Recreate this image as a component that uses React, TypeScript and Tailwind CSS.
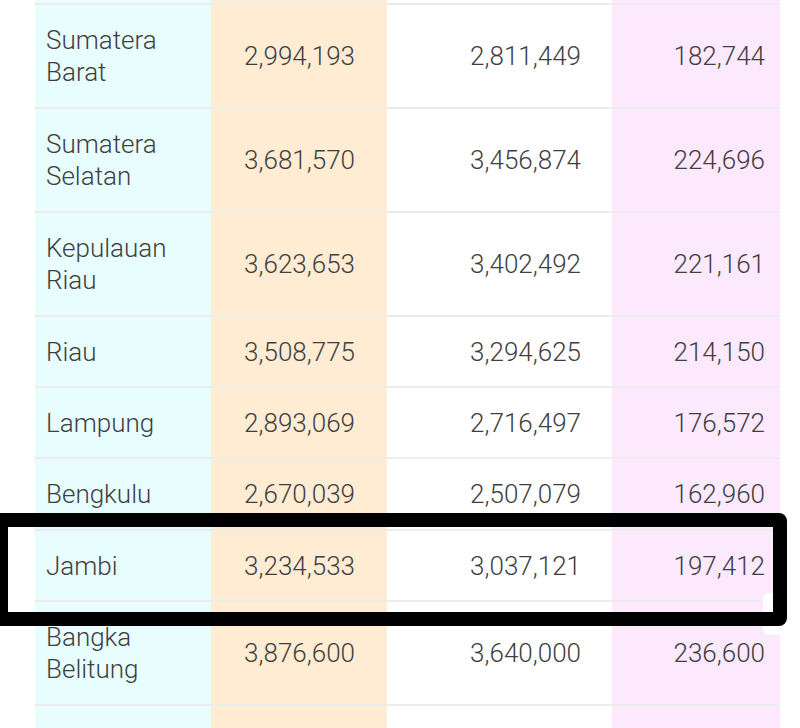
import React from 'react'

type Row = { name: string[]; total: string; a: string; b: string; tall: boolean }

const rows: Row[] = [
  { name: ['Sumatera', 'Barat'], total: '2,994,193', a: '2,811,449', b: '182,744', tall: true },
  { name: ['Sumatera', 'Selatan'], total: '3,681,570', a: '3,456,874', b: '224,696', tall: true },
  { name: ['Kepulauan', 'Riau'], total: '3,623,653', a: '3,402,492', b: '221,161', tall: true },
  { name: ['Riau'], total: '3,508,775', a: '3,294,625', b: '214,150', tall: false },
  { name: ['Lampung'], total: '2,893,069', a: '2,716,497', b: '176,572', tall: false },
  { name: ['Bengkulu'], total: '2,670,039', a: '2,507,079', b: '162,960', tall: false },
  { name: ['Jambi'], total: '3,234,533', a: '3,037,121', b: '197,412', tall: false },
  { name: ['Bangka', 'Belitung'], total: '3,876,600', a: '3,640,000', b: '236,600', tall: true },
]

function Cells({ row }: { row?: Row }) {
  return (
    <>
      <div className="flex w-[176px] shrink-0 flex-col justify-center bg-[#e8fdfe] pl-[11px]">
        {row?.name.map((n) => (
          <span key={n}>{n}</span>
        ))}
      </div>
      <div className="flex w-[176px] shrink-0 items-center justify-end bg-[#ffecd3] pr-[32px]">{row?.total}</div>
      <div className="flex w-[225px] shrink-0 items-center justify-end bg-white pr-[31px]">{row?.a}</div>
      <div className="flex w-[168px] shrink-0 items-center justify-end bg-[#fde9fd] pr-[15px]">{row?.b}</div>
    </>
  )
}

export default function App() {
  return (
    <div
      className="relative h-[728px] w-[800px] overflow-hidden bg-white text-[26px] font-light leading-[32px] text-[#3f3f3f]"
      style={{ fontFamily: 'Roboto, "Liberation Sans", sans-serif' }}
    >
      <div className="ml-[35px] w-[745px]">
        <div className="flex h-[3px]">
          <Cells />
        </div>
        {rows.map((row, i) => (
          <div
            key={row.name.join(' ')}
            className={`flex border-t-2 border-[#ececec] ${row.tall ? 'h-[104px]' : i === 5 ? 'h-[72px]' : 'h-[71px]'}`}
          >
            <Cells row={row} />
          </div>
        ))}
        <div className="flex h-[30px] border-t-2 border-[#ececec]">
          <Cells />
        </div>
      </div>

      {/* scroll thumb */}
      <div className="absolute left-[763px] top-[593px] h-[42px] w-[20px] rounded-l-[6px] bg-white" />

      {/* highlight box */}
      <div className="absolute left-[-6px] top-[513px] h-[113px] w-[793px] rounded-r-[8px] border-[14px] border-black" />
    </div>
  )
}
